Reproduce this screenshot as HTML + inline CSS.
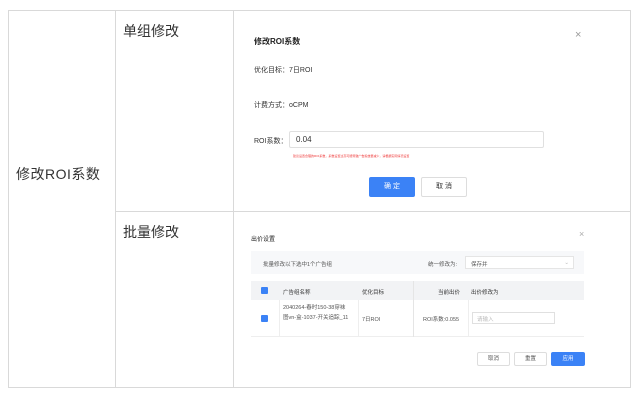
<!DOCTYPE html>
<html><head><meta charset="utf-8"><style>
*{margin:0;padding:0;box-sizing:border-box}
body{width:643px;height:401px;background:#fff;position:relative;overflow:hidden;font-family:"Liberation Sans","Noto Sans CJK SC",sans-serif;color:#333}
.a{position:absolute;white-space:nowrap}
.l{position:absolute;background:#d9d9d9}
.s{font-size:7px;color:#333}
.t{font-size:5.5px;color:#555}
.btn{position:absolute;border:1px solid #ddd;border-radius:2px;background:#fff;text-align:center}
</style></head><body>
<div class="l" style="left:8px;top:10px;width:623px;height:1px"></div>
<div class="l" style="left:8px;top:387px;width:623px;height:1px"></div>
<div class="l" style="left:8px;top:10px;width:1px;height:378px"></div>
<div class="l" style="left:630px;top:10px;width:1px;height:378px"></div>
<div class="l" style="left:115px;top:10px;width:1px;height:378px"></div>
<div class="l" style="left:233px;top:10px;width:1px;height:378px"></div>
<div class="l" style="left:115px;top:211px;width:516px;height:1px"></div>
<div class="a" style="left:16px;top:164px;font-size:14px;color:#333;letter-spacing:0.5px">修改ROI系数</div>
<div class="a" style="left:123px;top:21px;font-size:14px;color:#333">单组修改</div>
<div class="a" style="left:123px;top:222px;font-size:14px;color:#333">批量修改</div>

<div class="a" style="left:254px;top:36px;font-size:8px;font-weight:bold;color:#222">修改ROI系数</div>
<div class="a" style="left:575px;top:29px;font-size:11px;color:#999">×</div>
<div class="a s" style="left:254px;top:65px">优化目标：7日ROI</div>
<div class="a s" style="left:254px;top:100px">计费方式：oCPM</div>
<div class="a s" style="left:254px;top:136px">ROI系数：</div>
<div class="a" style="left:289px;top:131px;width:255px;height:17px;border:1px solid #e0e0e0;border-radius:2px;font-size:8px;padding:3px 6px">0.04</div>
<div class="a" style="left:293px;top:154px;font-size:3px;color:#e33">建议设置合理的ROI系数，系数设置过高可能导致广告投放量减少，请根据实际情况设置</div>
<div class="a" style="left:369px;top:177px;width:46px;height:20px;background:#3b82f6;border-radius:2px;color:#fff;font-size:7px;text-align:center;line-height:20px">确 定</div>
<div class="btn" style="left:421px;top:177px;width:46px;height:20px;font-size:7px;line-height:18px">取 消</div>

<div class="a" style="left:251px;top:234px;font-size:6px;color:#222">出价设置</div>
<div class="a" style="left:579px;top:229px;font-size:9px;color:#aaa">×</div>
<div class="a" style="left:251px;top:251px;width:333px;height:23px;background:#f7f8fa"></div>
<div class="a t" style="left:263px;top:260px">批量修改以下选中1个广告组</div>
<div class="a t" style="left:428px;top:260px">统一修改为:</div>
<div class="a t" style="left:465px;top:256px;width:109px;height:13px;background:#fff;border:1px solid #e5e5e5;padding:3px 5px">保存并<span style="position:absolute;right:4px;color:#bbb">⌄</span></div>
<div class="a" style="left:251px;top:281px;width:333px;height:19px;background:#f2f3f5"></div>
<div class="a" style="left:251px;top:300px;width:333px;height:37px;border-bottom:1px solid #eee"></div>
<div class="l" style="left:413px;top:281px;width:1px;height:56px;background:#e5e5e5"></div>
<div class="l" style="left:279px;top:300px;width:1px;height:37px;background:#eee"></div>
<div class="l" style="left:358px;top:300px;width:1px;height:37px;background:#eee"></div>
<div class="l" style="left:468px;top:300px;width:1px;height:37px;background:#eee"></div>
<div class="a" style="left:261px;top:287px;width:7px;height:7px;background:#3b82f6;border-radius:1px"></div>
<div class="a" style="left:261px;top:315px;width:7px;height:7px;background:#3b82f6;border-radius:1px"></div>
<div class="a t" style="left:283px;top:288px;color:#333">广告组名称</div>
<div class="a t" style="left:362px;top:288px;color:#333">优化目标</div>
<div class="a t" style="left:438px;top:288px;color:#333">当前出价</div>
<div class="a t" style="left:471px;top:288px;color:#333">出价修改为</div>
<div class="a t" style="left:283px;top:303px;line-height:10px;white-space:normal;width:66px">2040264-春时150-38穿袜图vn-盒-1037-开关追踪_11</div>
<div class="a t" style="left:362px;top:315px">7日ROI</div>
<div class="a t" style="left:423px;top:315px">ROI系数:0.055</div>
<div class="a t" style="left:472px;top:312px;width:83px;height:12px;border:1px solid #e0e0e0;padding:2px 4px;color:#bbb">请输入</div>
<div class="btn t" style="left:477px;top:352px;width:33px;height:14px;line-height:12px">取消</div>
<div class="btn t" style="left:514px;top:352px;width:33px;height:14px;line-height:12px">重置</div>
<div class="a t" style="left:551px;top:352px;width:34px;height:14px;line-height:14px;background:#3b82f6;color:#fff;text-align:center;border-radius:2px">应用</div>
</body></html>
